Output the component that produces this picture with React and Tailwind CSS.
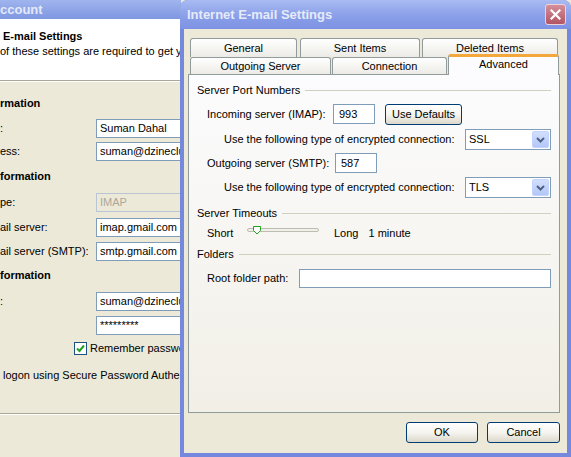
import React from 'react'

function BackRow({ label, value, disabled }) {
  return (
    <div className="flex items-center h-[19px]">
      <div className="w-[96px] shrink-0 whitespace-nowrap overflow-hidden">{label}</div>
      <div
        className={`w-[84px] shrink-0 h-[19px] border border-r-0 flex items-center pl-[3px] whitespace-nowrap overflow-hidden ${
          disabled ? 'bg-[#ece9d8] border-[#b9c5d4] text-[#aca899]' : 'bg-white border-[#7f9db9]'
        }`}
      >
        {value}
      </div>
    </div>
  )
}

function GroupHead({ title }) {
  return (
    <div className="flex items-center h-[16px]">
      <span className="whitespace-nowrap">{title}</span>
      <div className="flex-1 h-px bg-[#d0d0bf] ml-[5px]" />
    </div>
  )
}

function Select({ value }) {
  return (
    <div className="w-[86px] h-[21px] border border-[#7f9db9] bg-white flex items-center pl-[3px] pr-px">
      <span className="flex-1">{value}</span>
      <div className="w-[17px] h-[17px] rounded-[2px] border border-[#c3d3fd] bg-gradient-to-b from-[#d2defc] to-[#b3c7f7] flex items-center justify-center">
        <svg width="9" height="6" viewBox="0 0 9 6">
          <path d="M1 1 L4.5 4.5 L8 1" fill="none" stroke="#4d6185" strokeWidth="2" />
        </svg>
      </div>
    </div>
  )
}

function XpButton({ children, className }) {
  return (
    <div
      className={`h-[21px] rounded-[3px] border border-[#003c74] bg-gradient-to-b from-white via-[#f5f4ef] to-[#dcd8cb] flex items-center justify-center ${className}`}
    >
      {children}
    </div>
  )
}

function Tab({ label, className }) {
  return (
    <div
      className={`rounded-t-[3px] border border-[#919b9c] border-b-0 bg-gradient-to-b from-white to-[#ecebe6] flex items-center justify-center ${className}`}
    >
      {label}
    </div>
  )
}

export default function App() {
  return (
    <div className="relative w-[571px] h-[457px] overflow-hidden bg-[#ece9d8] text-[11px] leading-[13px] text-black font-['Liberation_Sans',Arial,sans-serif]">
      {/* account window behind, only its left part shows */}
      <div className="absolute left-0 top-0 w-[181px] h-[457px] overflow-hidden flex flex-col bg-[#ece9d8]">
        <div className="h-[19px] shrink-0 bg-gradient-to-b from-[#a0b4ee] to-[#7f97e1] flex items-center text-[13px] font-bold text-[#e4e9f8] leading-none">
          ccount
        </div>
        <div className="h-[61px] shrink-0 bg-white pt-[10px] leading-[15px]">
          <div className="pl-[3px] font-bold whitespace-nowrap">E-mail Settings</div>
          <div className="whitespace-nowrap">of these settings are required to get y</div>
        </div>
        <div className="h-[2px] shrink-0 border-t border-[#aca899] border-b border-b-white" />

        <div className="mt-[13px] h-[16px] leading-[16px] font-bold">rmation</div>
        <div className="mt-[8px]">
          <BackRow label=":" value="Suman Dahal" />
        </div>
        <div className="mt-[4px]">
          <BackRow label="ess:" value="suman@dzineclub" />
        </div>

        <div className="mt-[7px] h-[16px] leading-[16px] font-bold">formation</div>
        <div className="mt-[9px]">
          <BackRow label="pe:" value="IMAP" disabled />
        </div>
        <div className="mt-[6px]">
          <BackRow label="ail server:" value="imap.gmail.com" />
        </div>
        <div className="mt-[5px]">
          <BackRow label="ail server (SMTP):" value="smtp.gmail.com" />
        </div>

        <div className="mt-[6px] h-[16px] leading-[16px] font-bold">formation</div>
        <div className="mt-[9px]">
          <BackRow label=":" value="suman@dzineclub" />
        </div>
        <div className="mt-[5px]">
          <BackRow label="" value="*********" />
        </div>

        <div className="mt-[7px] h-[13px] flex items-center pl-[74px]">
          <div className="w-[13px] h-[13px] shrink-0 border border-[#1c5180] bg-white flex items-center justify-center">
            <svg width="9" height="9" viewBox="0 0 9 9">
              <path d="M1 4.5 L3.5 7 L8 1.5" fill="none" stroke="#21a121" strokeWidth="2" />
            </svg>
          </div>
          <span className="ml-[3px] whitespace-nowrap">Remember passwo</span>
        </div>
        <div className="mt-[12px] h-[16px] leading-[16px] pl-[3px] whitespace-nowrap">
          logon using Secure Password Authen
        </div>
        <div className="mt-[30px] h-[2px] shrink-0 border-t border-[#aca899] border-b border-b-white" />
      </div>

      {/* Internet E-mail Settings dialog */}
      <div className="absolute left-[180px] top-0 w-[391px] h-[457px] flex flex-col rounded-t-[8px] overflow-hidden bg-[#7489de]">
        <div className="h-[29px] shrink-0 bg-gradient-to-b from-[#a9bbf2] via-[#8ca1e9] to-[#7d92e2] flex items-center pl-[7px] pr-[5px]">
          <span className="text-[13px] font-bold text-[#e6ebfa] leading-none">Internet E-mail Settings</span>
          <div className="ml-auto w-[21px] h-[21px] rounded-[3px] border border-[#efd2d7] bg-gradient-to-b from-[#d48f9b] to-[#b25564] flex items-center justify-center">
            <svg width="11" height="11" viewBox="0 0 11 11">
              <path d="M1.5 1.5 L9.5 9.5 M9.5 1.5 L1.5 9.5" stroke="white" strokeWidth="2.2" strokeLinecap="square" />
            </svg>
          </div>
        </div>

        <div className="flex-1 mx-[4px] mb-[4px] bg-[#ece9d8] pl-[4px] pt-[9px] flex flex-col">
          <div className="w-[372px]">
            {/* tabs */}
            <div className="flex h-[19px] pl-[2px]">
              <Tab label="General" className="w-[107px]" />
              <Tab label="Sent Items" className="w-[120px] ml-[3px]" />
              <Tab label="Deleted Items" className="w-[136px] ml-[2px]" />
            </div>
            <div className="flex h-[17px] pl-[2px] items-end">
              <Tab label="Outgoing Server" className="w-[141px] h-[17px]" />
              <Tab label="Connection" className="w-[115px] h-[17px] ml-px" />
              <div className="relative z-10 w-[111px] h-[21px] ml-px -mb-px rounded-t-[3px] border-x border-[#919b9c] border-t-[3px] border-t-[#f4a83c] bg-[#fcfcfe] flex items-start justify-center pt-[1px]">
                Advanced
              </div>
            </div>

            {/* panel */}
            <div className="h-[339px] border border-[#919b9c] bg-gradient-to-b from-[#fcfcfe] to-[#f1efe6] px-[8px] pt-[7px]">
              <GroupHead title="Server Port Numbers" />
              <div className="mt-[6px] h-[20px] flex items-center pl-[10px]">
                <span className="w-[126px] whitespace-nowrap">Incoming server (IMAP):</span>
                <div className="w-[42px] h-[20px] border border-[#7f9db9] bg-white flex items-center pl-[5px]">993</div>
                <XpButton className="w-[77px] ml-[10px]">Use Defaults</XpButton>
              </div>
              <div className="mt-[5px] flex items-center pl-[27px]">
                <span className="whitespace-nowrap">Use the following type of encrypted connection:</span>
                <div className="ml-auto">
                  <Select value="SSL" />
                </div>
              </div>
              <div className="mt-[3px] h-[20px] flex items-center pl-[10px]">
                <span className="w-[128px] whitespace-nowrap">Outgoing server (SMTP):</span>
                <div className="w-[42px] h-[20px] border border-[#7f9db9] bg-white flex items-center pl-[5px]">587</div>
              </div>
              <div className="mt-[4px] flex items-center pl-[27px]">
                <span className="whitespace-nowrap">Use the following type of encrypted connection:</span>
                <div className="ml-auto">
                  <Select value="TLS" />
                </div>
              </div>

              <div className="mt-[7px]">
                <GroupHead title="Server Timeouts" />
              </div>
              <div className="mt-[4px] h-[16px] flex items-center pl-[10px]">
                <span className="w-[40px]">Short</span>
                <div className="relative w-[72px] h-[4px] mb-[6px] rounded-[2px] border border-[#bdbcb2] bg-[#f0efe8]">
                  <svg className="absolute left-[5px] -top-[3px]" width="8" height="9" viewBox="0 0 8 9">
                    <path d="M0.5 0.5 H7.5 V4.5 L4 8 L0.5 4.5 Z" fill="white" stroke="#21a121" strokeWidth="1" />
                  </svg>
                </div>
                <span className="ml-[15px]">Long</span>
                <span className="ml-[10px]">1 minute</span>
              </div>

              <div className="mt-[5px]">
                <GroupHead title="Folders" />
              </div>
              <div className="mt-[7px] h-[19px] flex items-center pl-[10px]">
                <span className="w-[92px] whitespace-nowrap">Root folder path:</span>
                <div className="flex-1 h-[19px] border border-[#7f9db9] bg-white" />
              </div>
            </div>

            <div className="mt-[9px] flex justify-end gap-[9px]">
              <XpButton className="w-[72px]">OK</XpButton>
              <XpButton className="w-[73px]">Cancel</XpButton>
            </div>
          </div>
        </div>
      </div>
    </div>
  )
}
